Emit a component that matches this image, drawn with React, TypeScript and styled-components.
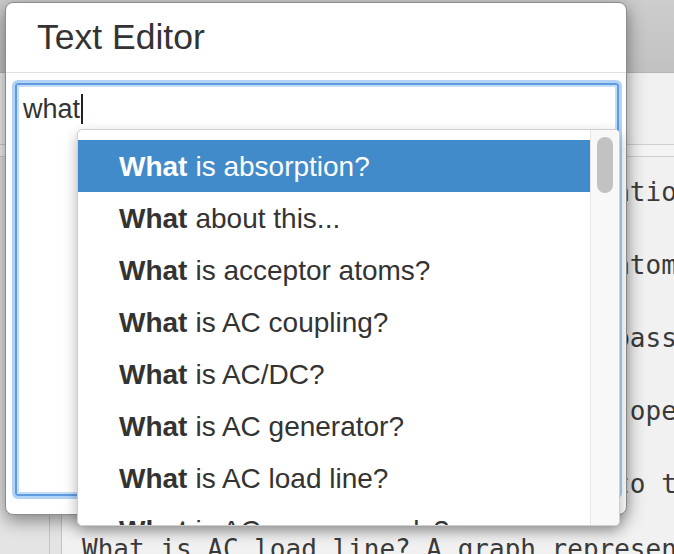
import styled, { createGlobalStyle } from "styled-components";

const GlobalStyle = createGlobalStyle`
    html, body {
        margin: 0;
        padding: 0;
        background: #ececec;
    }
    * {
        box-sizing: border-box;
    }
`;

const Page = styled.div`
    position: relative;
    width: 674px;
    height: 554px;
    overflow: hidden;
    display: flex;
    flex-direction: column;
    background: #ececec;
    font-family: "Liberation Sans", Arial, sans-serif;
`;

const TopBar = styled.div`
    height: 73px;
    flex-shrink: 0;
    background: linear-gradient(#cdcdcd, #c2c2c2);
    border-bottom: 1px solid #b5b5b5;
`;

const SubBar = styled.div`
    height: 72px;
    flex-shrink: 0;
    background: #f0f0f0;
    border-bottom: 1px solid #cfcfcf;
`;

const Strip = styled.div`
    height: 12px;
    flex-shrink: 0;
    background: #f4f4f4;
    border-bottom: 1px solid #cfcfcf;
`;

const Body = styled.div`
    flex: 1;
    display: flex;
`;

const Gutter = styled.div<{ $width: number }>`
    width: ${(p) => p.$width}px;
    flex-shrink: 0;
    background: #e4e4e4;
    border-right: 1px solid #c4c4c4;
`;

const Panel = styled.div`
    flex: 1;
    background: #f1f1f1;
    padding: 22px 0 0 20px;
    display: flex;
    flex-direction: column;
    gap: 46px;
    font-family: "DejaVu Sans Mono", "Liberation Mono", monospace;
    font-size: 26px;
    line-height: 27px;
    color: #3a3a3a;
    white-space: pre;
`;

const PanelLine = styled.div<{ $tight?: boolean }>`
    margin-top: ${(p) => (p.$tight ? "-8px" : "0")};
`;

const Dialog = styled.div`
    position: absolute;
    left: 5px;
    top: 2px;
    width: 622px;
    height: 513px;
    background: #fff;
    border: 1px solid #8c8c8c;
    border-radius: 8px;
    box-shadow: 0 5px 18px rgba(0, 0, 0, 0.45);
    display: flex;
    flex-direction: column;
`;

const Header = styled.div`
    height: 70px;
    flex-shrink: 0;
    display: flex;
    align-items: center;
    padding-left: 31px;
    border-bottom: 1px solid #e2e2e2;
`;

const Title = styled.h4`
    margin: 0;
    font-size: 35.5px;
    font-weight: normal;
    color: #333;
`;

const Content = styled.div`
    position: relative;
    flex: 1;
    padding: 10px 7px 18px 9px;
`;

const Editor = styled.div`
    height: 100%;
    border: 2px solid #5f9be0;
    border-radius: 3px;
    box-shadow: 0 0 0 3px #b3d3f6, inset 0 0 0 2px #c4ddf8;
    padding: 7px 6px;
    font-size: 27px;
    line-height: 34px;
    color: #333;
`;

const Caret = styled.span`
    display: inline-block;
    width: 2px;
    height: 30px;
    margin-left: 1px;
    background: #222;
    vertical-align: -6px;
`;

const Dropdown = styled.div`
    position: absolute;
    left: 71px;
    top: 56px;
    width: 543px;
    height: 397px;
    background: #fff;
    border: 1px solid #d0d0d0;
    border-radius: 5px;
    box-shadow: 0 6px 14px rgba(0, 0, 0, 0.3);
    overflow: hidden;
    display: flex;
`;

const List = styled.ul`
    flex: 1;
    margin: 0;
    padding: 10px 0 0;
    list-style: none;
`;

const Item = styled.li<{ $active?: boolean }>`
    height: 52px;
    display: flex;
    align-items: center;
    padding: 2px 0 0 41px;
    font-size: 28px;
    white-space: nowrap;
    color: ${(p) => (p.$active ? "#fff" : "#333")};
    background: ${(p) => (p.$active ? "#428bca" : "transparent")};
    b {
        font-weight: bold;
        margin-right: 8px;
    }
`;

const ScrollTrack = styled.div`
    width: 29px;
    flex-shrink: 0;
    background: #f8f8f8;
    border-left: 1px solid #e6e6e6;
    padding: 7px 6px 0 6px;
`;

const Thumb = styled.div`
    height: 56px;
    border-radius: 8px;
    background: #c2c2c2;
`;

const suggestions = [
    "is absorption?",
    "about this...",
    "is acceptor atoms?",
    "is AC coupling?",
    "is AC/DC?",
    "is AC generator?",
    "is AC load line?",
    "is AC power supply?",
];

const backgroundLines = [
    "What is absorption? Loss by attenuation of energy",
    "What is acceptor atoms? Trivalent atoms that accept",
    "What is AC coupling? Caps used to pass AC only",
    "What is AC/DC? A machine which can operate on both",
    "What is AC generator? Device used to turn motion",
];

function App() {
    return (
        <Page>
            <GlobalStyle />
            <TopBar />
            <SubBar />
            <Strip />
            <Body>
                <Gutter $width={50} />
                <Gutter $width={12} />
                <Panel>
                    {backgroundLines.map((line) => (
                        <PanelLine key={line}>{line}</PanelLine>
                    ))}
                    <PanelLine $tight>What is AC load line? A graph representing</PanelLine>
                </Panel>
            </Body>
            <Dialog>
                <Header>
                    <Title>Text Editor</Title>
                </Header>
                <Content>
                    <Editor>
                        what<Caret />
                    </Editor>
                    <Dropdown>
                        <List>
                            {suggestions.map((s, i) => (
                                <Item key={s} $active={i === 0}>
                                    <b>What</b>
                                    {s}
                                </Item>
                            ))}
                        </List>
                        <ScrollTrack>
                            <Thumb />
                        </ScrollTrack>
                    </Dropdown>
                </Content>
            </Dialog>
        </Page>
    );
}

export default App;
